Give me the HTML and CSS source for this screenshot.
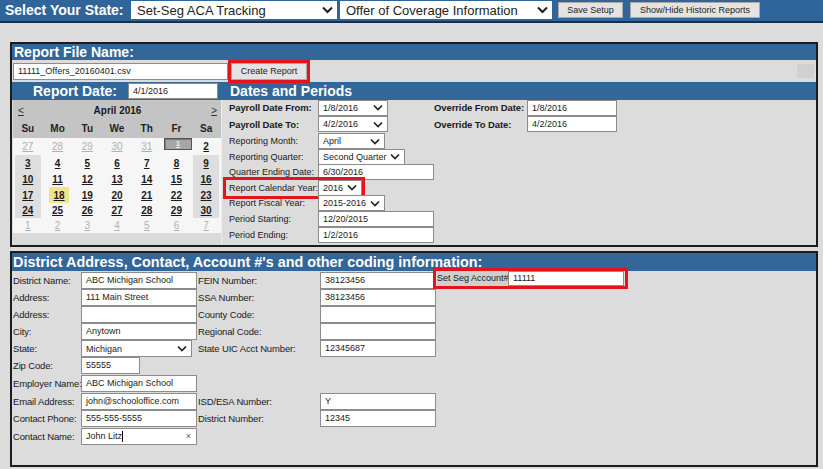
FILE: index.html
```html
<!DOCTYPE html>
<html lang="en">
<head>
<meta charset="utf-8">
<title>Offer of Coverage Information</title>
<link rel="stylesheet" href="styles.css">
</head>
<body>
<div class="topbar">
  <span class="state-label">Select Your State:</span>
  <div class="tsel tsel-1"><span>Set-Seg ACA Tracking</span><svg class="tchev" width="11" height="8" viewBox="0 0 11 8"><path d="M1 1.5 L5.5 6 L10 1.5" fill="none" stroke="#1e1e1e" stroke-width="2"/></svg></div>
  <div class="tsel tsel-2"><span>Offer of Coverage Information</span><svg class="tchev" width="11" height="8" viewBox="0 0 11 8"><path d="M1 1.5 L5.5 6 L10 1.5" fill="none" stroke="#1e1e1e" stroke-width="2"/></svg></div>
  <button class="tbtn btn-save">Save Setup</button>
  <button class="tbtn btn-hist">Show/Hide Historic Reports</button>
</div>

<section class="panel panel-report">
  <div class="bar bar-title">Report File Name:</div>
  <div class="file-row">
    <div class="inp inp-file">11111_Offers_20160401.csv</div>
    <button class="btn-create">Create Report</button>
    <div class="mini-box"></div>
  </div>
  <div class="bar bar-split">
    <div class="rd">
      <span class="rd-label">Report Date:</span>
      <div class="inp inp-rd">4/1/2016</div>
    </div>
    <span class="dp-title">Dates and Periods</span>
  </div>
  <div class="report-body">
    <div class="calendar">
      <div class="cal-head"><span class="cal-nav">&lt;</span><span class="cal-month">April 2016</span><span class="cal-nav">&gt;</span></div>
      <div class="cal-row cal-dows"><span>Su</span><span>Mo</span><span>Tu</span><span>We</span><span>Th</span><span>Fr</span><span>Sa</span></div>
      <div class="cal-row wk-1"><span class="d other">27</span><span class="d other">28</span><span class="d other">29</span><span class="d other">30</span><span class="d other">31</span><span class="d sel">1</span><span class="d">2</span></div>
      <div class="cal-row wk-2"><span class="d we">3</span><span class="d">4</span><span class="d">5</span><span class="d">6</span><span class="d">7</span><span class="d">8</span><span class="d we">9</span></div>
      <div class="cal-row wk-3"><span class="d we">10</span><span class="d">11</span><span class="d">12</span><span class="d">13</span><span class="d">14</span><span class="d">15</span><span class="d we">16</span></div>
      <div class="cal-row wk-4"><span class="d we">17</span><span class="d today">18</span><span class="d">19</span><span class="d">20</span><span class="d">21</span><span class="d">22</span><span class="d we">23</span></div>
      <div class="cal-row wk-5"><span class="d we">24</span><span class="d">25</span><span class="d">26</span><span class="d">27</span><span class="d">28</span><span class="d">29</span><span class="d we">30</span></div>
      <div class="cal-row wk-6"><span class="d other">1</span><span class="d other">2</span><span class="d other">3</span><span class="d other">4</span><span class="d other">5</span><span class="d other">6</span><span class="d other">7</span></div>
      <div class="cal-foot"></div>
    </div>

    <div class="dates">
      <span class="lbl c1 b">Payroll Date From:</span>
      <div class="fsel c2 w70"><span>1/8/2016</span><svg width="10" height="7" viewBox="0 0 10 7"><path d="M1 1.5 L5 5.5 L9 1.5" fill="none" stroke="#222" stroke-width="1.7"/></svg></div>
      <span class="lbl c3 b">Override From Date:</span>
      <div class="inp c4 dinp">1/8/2016</div>

      <span class="lbl c1 b">Payroll Date To:</span>
      <div class="fsel c2 w70"><span>4/2/2016</span><svg width="10" height="7" viewBox="0 0 10 7"><path d="M1 1.5 L5 5.5 L9 1.5" fill="none" stroke="#222" stroke-width="1.7"/></svg></div>
      <span class="lbl c3 b">Override To Date:</span>
      <div class="inp c4 dinp">4/2/2016</div>

      <span class="lbl c1">Reporting Month:</span>
      <div class="fsel c2 w67"><span>April</span><svg width="10" height="7" viewBox="0 0 10 7"><path d="M1 1.5 L5 5.5 L9 1.5" fill="none" stroke="#222" stroke-width="1.7"/></svg></div>

      <span class="lbl c1">Reporting Quarter:</span>
      <div class="fsel c2 w87"><span>Second Quarter</span><svg width="10" height="7" viewBox="0 0 10 7"><path d="M1 1.5 L5 5.5 L9 1.5" fill="none" stroke="#222" stroke-width="1.7"/></svg></div>

      <span class="lbl c1">Quarter Ending Date:</span>
      <div class="inp c2 w116">6/30/2016</div>

      <div class="hl">
        <span class="lbl hl-lbl">Report Calendar Year:</span>
        <div class="fsel w44"><span>2016</span><svg width="10" height="7" viewBox="0 0 10 7"><path d="M1 1.5 L5 5.5 L9 1.5" fill="none" stroke="#222" stroke-width="1.7"/></svg></div>
      </div>

      <span class="lbl c1">Report Fiscal Year:</span>
      <div class="fsel c2 w67"><span>2015-2016</span><svg width="10" height="7" viewBox="0 0 10 7"><path d="M1 1.5 L5 5.5 L9 1.5" fill="none" stroke="#222" stroke-width="1.7"/></svg></div>

      <span class="lbl c1">Period Starting:</span>
      <div class="inp c2 w116">12/20/2015</div>

      <span class="lbl c1">Period Ending:</span>
      <div class="inp c2 w116">1/2/2016</div>
    </div>
  </div>
</section>

<section class="panel panel-district">
  <div class="bar bar-district">District Address, Contact, Account #'s and other coding information:</div>
  <div class="district">
    <span class="lbl k1">District Name:</span>
    <div class="inp k2">ABC Michigan School</div>
    <span class="lbl k3">FEIN Number:</span>
    <div class="inp k4">38123456</div>
    <div class="setseg">
      <span class="setseg-lbl">Set Seg Account#</span>
      <div class="inp setseg-inp">11111</div>
    </div>

    <span class="lbl k1">Address:</span>
    <div class="inp k2">111 Main Street</div>
    <span class="lbl k3">SSA Number:</span>
    <div class="inp k4">38123456</div>

    <span class="lbl k1">Address:</span>
    <div class="inp k2"></div>
    <span class="lbl k3">County Code:</span>
    <div class="inp k4"></div>

    <span class="lbl k1">City:</span>
    <div class="inp k2">Anytown</div>
    <span class="lbl k3">Regional Code:</span>
    <div class="inp k4"></div>

    <span class="lbl k1">State:</span>
    <div class="fsel k2 w111"><span>Michigan</span><svg width="10" height="7" viewBox="0 0 10 7"><path d="M1 1.5 L5 5.5 L9 1.5" fill="none" stroke="#222" stroke-width="1.7"/></svg></div>
    <span class="lbl k3">State UIC Acct Number:</span>
    <div class="inp k4">12345687</div>

    <span class="lbl k1">Zip Code:</span>
    <div class="inp k2 w59">55555</div>

    <span class="lbl k1">Employer Name:</span>
    <div class="inp k2">ABC Michigan School</div>

    <span class="lbl k1">Email Address:</span>
    <div class="inp k2">john@schooloffice.com</div>
    <span class="lbl k3">ISD/ESA Number:</span>
    <div class="inp k4">Y</div>

    <span class="lbl k1">Contact Phone:</span>
    <div class="inp k2">555-555-5555</div>
    <span class="lbl k3">District Number:</span>
    <div class="inp k4">12345</div>

    <span class="lbl k1">Contact Name:</span>
    <div class="inp k2 inp-contact"><span>John Litz</span><span class="caret"></span><span class="clear">×</span></div>
  </div>
</section>
</body>
</html>
```

FILE: styles.css
```css
* { box-sizing: border-box; }
html, body { margin: 0; padding: 0; }
body {
  width: 823px;
  height: 469px;
  overflow: hidden;
  background: #dcdcdc;
  font-family: "Liberation Sans", Arial, sans-serif;
  color: #1a1a1a;
}

/* ---------- top bar ---------- */
.topbar {
  display: flex;
  align-items: flex-start;
  height: 23px;
  padding: 1px 0 0 5px;
  background: #30659b;
  border-bottom: 2px solid #1d2f45;
}
.state-label {
  width: 126px;
  font-size: 14px;
  font-weight: bold;
  line-height: 18px;
  color: #fff;
}
.tsel {
  display: flex;
  align-items: center;
  justify-content: space-between;
  height: 18px;
  padding: 0 4px 0 6px;
  background: #fff;
  font-size: 13px;
  color: #222;
}
.tsel-1 { width: 206px; margin-right: 3px; }
.tsel-2 { width: 212px; margin-right: 6px; }
.tbtn {
  height: 16px;
  margin-top: 1px;
  padding: 0;
  font: 9px "Liberation Sans", Arial, sans-serif;
  color: #222;
  background: #e3e3e3;
  border: 1px solid #a9a9a9;
}
.btn-save { width: 65px; margin-right: 7px; }
.btn-hist { width: 130px; }

/* ---------- panels ---------- */
.panel {
  width: 808px;
  margin-left: 10px;
  border: 2px solid #1c1c1c;
  background: #dcdcdc;
}
.panel-report { margin-top: 19px; height: 205px; }
.panel-district { margin-top: 4px; height: 216px; }

.bar {
  background: #336699;
  color: #fff;
  font-size: 14px;
  font-weight: bold;
}
.bar-title { height: 16px; line-height: 16px; padding-left: 2px; }

.inp {
  height: 17px;
  padding-left: 4px;
  background: #fff;
  border: 1px solid #8c8c8c;
  font-size: 9px;
  line-height: 15px;
  color: #222;
  white-space: nowrap;
  overflow: hidden;
}

.file-row {
  display: flex;
  align-items: center;
  height: 22px;
  padding-left: 1px;
}
.inp-file { width: 215px; }
.btn-create {
  width: 76px;
  height: 17px;
  margin-left: 3px;
  padding: 0;
  font: 9px "Liberation Sans", Arial, sans-serif;
  color: #222;
  background: #e3e3e3;
  border: 1px solid #a9a9a9;
  outline: 3px solid #e3141c;
}
.mini-box {
  width: 17px;
  height: 14px;
  margin-left: auto;
  margin-right: 2px;
  background: #d0d0d0;
}

.bar-split {
  display: flex;
  align-items: center;
  height: 18px;
}
.rd {
  display: flex;
  align-items: center;
  width: 209px;
  padding-left: 21px;
}
.rd-label { width: 95px; }
.inp-rd { width: 90px; height: 16px; line-height: 14px; font-weight: normal; }
.dp-title { margin-left: 9px; }

.report-body {
  display: flex;
  height: 145px;
}

/* ---------- calendar ---------- */
.calendar {
  width: 208px;
  margin-left: 1px;
  display: flex;
  flex-direction: column;
  background: #f6f6f6;
  font-size: 10px;
  font-weight: bold;
}
.cal-head {
  display: flex;
  align-items: center;
  justify-content: space-between;
  height: 18px;
  padding: 2px 4px 0 5px;
  background: #c4c4c4;
}
.cal-nav { text-decoration: underline; font-weight: normal; color: #333; }
.cal-row {
  display: grid;
  grid-template-columns: repeat(7, 1fr);
  align-items: stretch;
}
.cal-row > span {
  display: flex;
  align-items: center;
  justify-content: center;
}
.cal-dows { height: 20px; background: #c4c4c4; color: #222; }
.wk-1 { height: 17px; }
.wk-2, .wk-3, .wk-4 { height: 16px; }
.wk-5, .wk-6 { height: 15px; }
.d { text-decoration: underline; color: #1a1a1a; margin: 0 2px; }
.d.we { background: #dedede; }
.d.other { color: #b0b0b0; font-weight: normal; }
.d.today { background: #efe58a; margin: 0 3px 0 6px; }
.cal-row > .d.sel {
  align-self: start;
  height: 12px;
  margin: 0 -1px 0 2px;
  background: #a6a6a6;
  color: #efefef;
  font-size: 8px;
  line-height: 10px;
  border: 1px solid #555;
  box-shadow: inset 1px 1px 0 #7a7a7a;
}
.cal-foot { flex: 1; background: #dadada; }

/* ---------- dates & periods ---------- */
.dates {
  display: grid;
  grid-template-columns: 89px 116px 93px 90px;
  grid-template-rows: 15px 18px 16px 15px 16px 15px 16px 15px 18px;
  align-items: center;
  padding-left: 7px;
  border-left: 1px solid #ececec;
}
.lbl { font-size: 9px; white-space: nowrap; color: #1a1a1a; }
.b { font-weight: bold; font-size: 9.5px; letter-spacing: -0.1px; }
.c1 { grid-column: 1; }
.c2 { grid-column: 2; }
.c3 { grid-column: 3; }
.c4 { grid-column: 4; }
.dinp { width: 90px; height: 16px; line-height: 14px; }
.w116 { width: 116px; height: 16px; line-height: 14px; }

.fsel {
  display: flex;
  align-items: center;
  justify-content: space-between;
  height: 16px;
  padding: 0 4px 0 4px;
  background: #fff;
  border: 1px solid #8c8c8c;
  font-size: 9px;
  color: #222;
  white-space: nowrap;
}
.w70 { width: 70px; }
.w67 { width: 67px; }
.w87 { width: 87px; }
.w44 { width: 44px; }
.w111 { width: 111px; }
.w59 { width: 59px; }

.hl {
  grid-column: 1 / 3;
  display: flex;
  align-items: center;
  width: fit-content;
  margin-left: -6px;
  padding-left: 3px;
  border: 3px solid #e3141c;
}
.hl-lbl { width: 89px; }

/* ---------- district ---------- */
.bar-district {
  height: 18px;
  line-height: 18px;
  padding-left: 1px;
  font-size: 14.4px;
  white-space: nowrap;
  overflow: hidden;
}
.district {
  display: grid;
  grid-template-columns: 68px 116px 123px 116px 200px;
  grid-template-rows: 17px 17px 17px 17px 17px 17px 18px 18px 17px 18px;
  align-items: center;
  padding-left: 1px;
  margin-top: 1px;
}
.district .lbl { font-size: 9.5px; letter-spacing: -0.15px; }
.k1 { grid-column: 1; }
.k2 { grid-column: 2; }
.k3 { grid-column: 3; padding-left: 1px; }
.k4 { grid-column: 4; }
.district .inp.k2, .district .inp.k4 { width: 116px; }
.district .inp.w59 { width: 59px; }
.district .fsel { height: 17px; }

.setseg {
  grid-column: 5;
  grid-row: 1;
  display: flex;
  align-items: center;
  width: 195px;
  height: 21px;
  margin-left: -3px;
  margin-top: -4px;
  padding-left: 1px;
  border: 3px solid #e3141c;
}
.setseg-lbl {
  width: 71px;
  height: 15px;
  line-height: 15px;
  background: #cfcfcf;
  font-size: 9px;
  white-space: nowrap;
}
.setseg-inp { width: 116px; height: 15px; line-height: 13px; }

.inp-contact {
  display: flex;
  align-items: center;
}
.caret { width: 1px; height: 11px; background: #000; }
.clear { margin-left: auto; margin-right: 5px; font-size: 9px; color: #555; }
```
